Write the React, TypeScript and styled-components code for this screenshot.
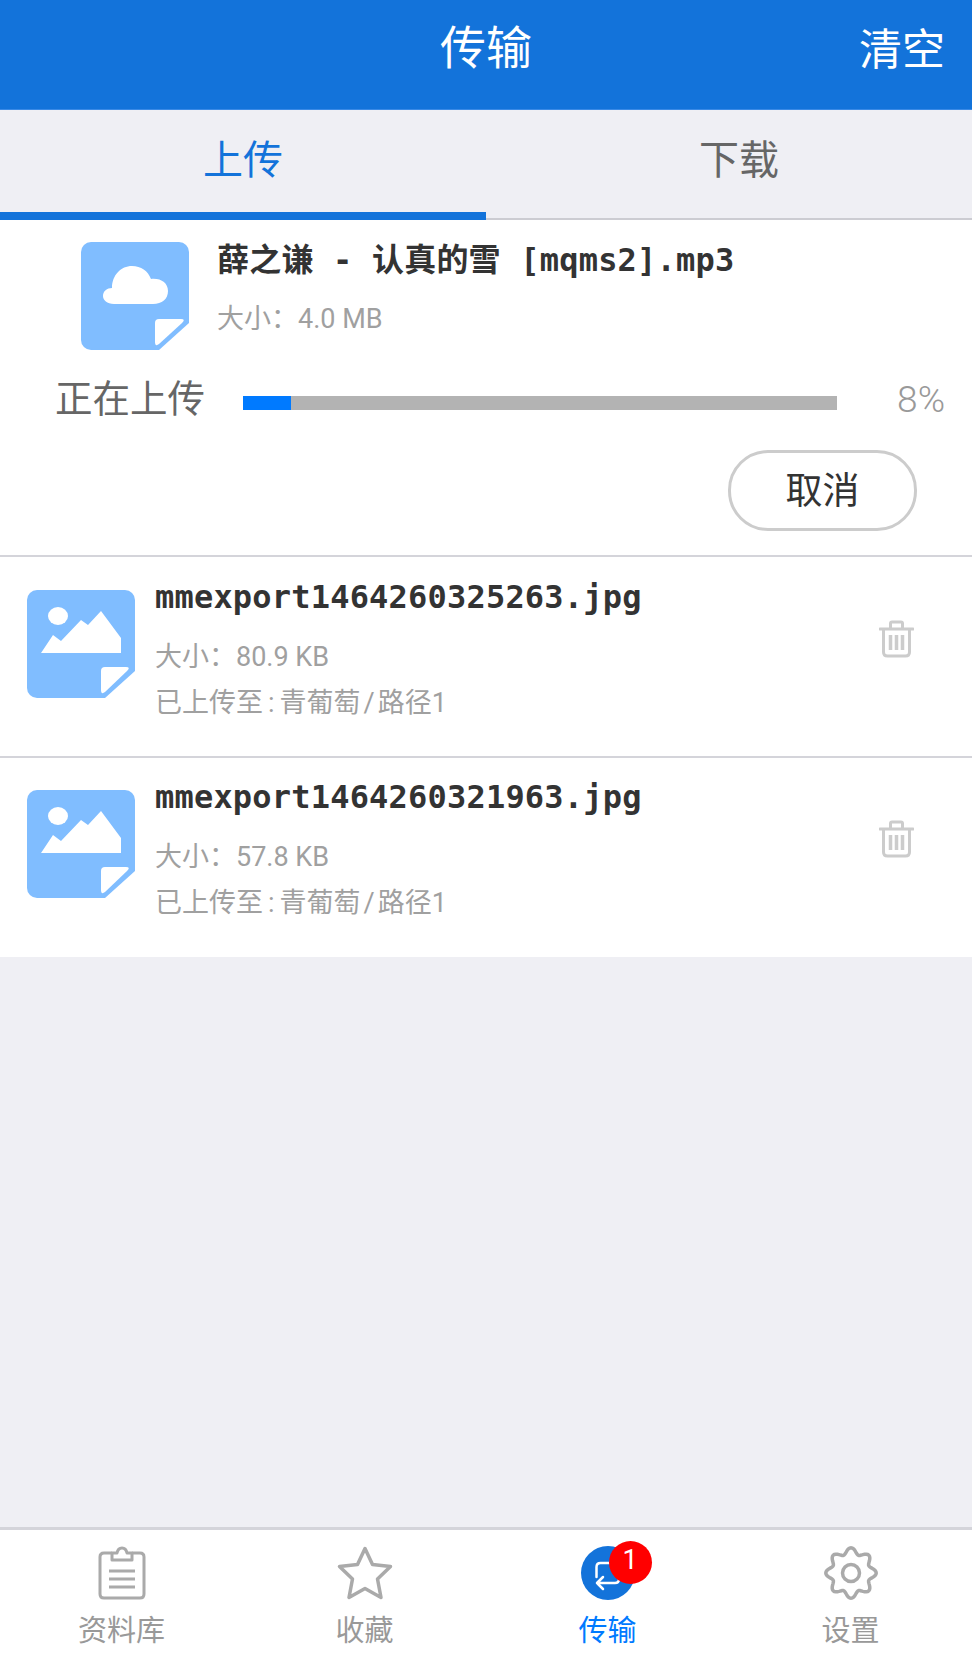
import styled, { createGlobalStyle } from 'styled-components';

const GlobalStyle = createGlobalStyle`
  html, body {
    margin: 0;
    padding: 0;
    background: #efeff4;
  }
  * {
    box-sizing: border-box;
  }
`;

const cjk = '"Noto Sans CJK SC", sans-serif';
const latin = `Roboto, ${cjk}`;
const mono = `"DejaVu Sans Mono", ${cjk}`;

const uploaded = [
  { id: 1, name: 'mmexport1464260325263.jpg', size: '80.9 KB', folder: '青葡萄', sub: '路径1' },
  { id: 2, name: 'mmexport1464260321963.jpg', size: '57.8 KB', folder: '青葡萄', sub: '路径1' },
];

// 톱니 모양 외곽선
const gearOutline = () => {
  const points: string[] = [];
  for (let deg = 0; deg < 360; deg += 3) {
    const rad = (deg * Math.PI) / 180;
    const r = 22.2 + 3 * Math.cos(8 * rad);
    points.push(`${(28 + r * Math.cos(rad)).toFixed(2)} ${(27 + r * Math.sin(rad)).toFixed(2)}`);
  }
  return `M${points.join('L')}Z`;
};

const CloudFile = () => (
  <FileIcon viewBox="0 0 108 108" $top={1}>
    <path d="M10 0H98A10 10 0 0 1 108 10V81L78 108H10A10 10 0 0 1 0 98V10A10 10 0 0 1 10 0Z" fill="#80bdff" />
    <path d="M33 62C26 62 22 58 22 54C22 49 26 46 31 46C31 33 40 24 51 24C60 24 67 29 70 37C80 36 87 41 87 49C87 57 81 62 72 62Z" fill="#fff" />
    <path d="M78 77H100Q105 77 101 81L78 102Q74 105 74 100V81Q74 77 78 77Z" fill="#fff" />
  </FileIcon>
);

const ImageFile = () => (
  <FileIcon viewBox="0 0 108 108" $top={12}>
    <path d="M10 0H98A10 10 0 0 1 108 10V81L78 108H10A10 10 0 0 1 0 98V10A10 10 0 0 1 10 0Z" fill="#80bdff" />
    <ellipse cx="31" cy="26" rx="10" ry="9" fill="#fff" />
    <path d="M14 63L26 45L34 51L54 30L61 35L74 21L94 48V63Z" fill="#fff" />
    <path d="M78 77H99Q104 77 100 81L78 102Q74 105 74 100V81Q74 77 78 77Z" fill="#fff" />
  </FileIcon>
);

const TrashIcon = () => (
  <svg width="35" height="38" viewBox="0 0 35 38" fill="none" stroke="#ccc" strokeWidth="3">
    <path d="M1 9H34" strokeLinecap="round" />
    <path d="M11.500 8V3.500Q11.500 2 13 2H22Q23.500 2 23.500 3.500V8" />
    <path d="M4.500 9V32Q4.500 36 8.500 36H26.500Q30.500 36 30.500 32V9" />
    <path d="M11.500 15V30M17.500 15V30M23.500 15V30" strokeWidth="3.500" />
  </svg>
);

const ClipboardIcon = () => (
  <svg width="54" height="54" viewBox="0 0 54 54" fill="none" stroke="#aaa" strokeWidth="3">
    <path d="M17 7H9Q5 7 5 11V48Q5 52 9 52H45Q49 52 49 48V11Q49 7 45 7H37" />
    <path d="M17 14V7H22Q23 2 27 2Q31 2 32 7H37V14Z" strokeLinejoin="round" />
    <path d="M14 25H40M14 33H40M14 41H40" />
  </svg>
);

const StarIcon = () => (
  <svg width="56" height="54" viewBox="0 0 56 54" fill="none" stroke="#aaa" strokeWidth="3.500" strokeLinejoin="round">
    <path d="M28 2.500L35.500 18.500L53.500 20.500L40.500 33L44 51.500L28 42.500L12 51.500L15.500 33L2.500 20.500L20.500 18.500Z" />
  </svg>
);

const TransferIcon = () => (
  <svg width="54" height="54" viewBox="0 0 54 54" fill="none">
    <circle cx="27" cy="27" r="27" fill="#1373da" />
    <path d="M15.500 31V21Q15.500 17 19.500 17H38M38 30V33Q38 37 34 37H16M22 31L16 37L22 43" stroke="#fff" strokeWidth="2.500" strokeLinecap="round" strokeLinejoin="round" />
  </svg>
);

const GearIcon = () => (
  <svg width="56" height="54" viewBox="0 0 56 54" fill="none" stroke="#aaa" strokeWidth="3.500">
    <path d={gearOutline()} />
    <circle cx="28" cy="27" r="8.500" />
  </svg>
);

const tabs = [
  { label: '资料库', icon: <ClipboardIcon /> },
  { label: '收藏', icon: <StarIcon /> },
  { label: '传输', icon: <TransferIcon />, active: true, badge: 1 },
  { label: '设置', icon: <GearIcon /> },
];

const App = () => (
  <Page>
    <GlobalStyle />
    <Header>
      <HeaderTitle>传输</HeaderTitle>
      <ClearButton>清空</ClearButton>
    </Header>
    <Segments>
      <Segment $active>上传</Segment>
      <Segment>下载</Segment>
    </Segments>
    <ActiveCard>
      <ActiveInfo>
        <CloudFile />
        <ActiveText>
          <FileName>薛之谦 - 认真的雪 [mqms2].mp3</FileName>
          <Meta>大小：4.0 MB</Meta>
        </ActiveText>
      </ActiveInfo>
      <ProgressRow>
        <ProgressLabel>正在上传</ProgressLabel>
        <ProgressTrack>
          <ProgressFill style={{ width: '8%' }} />
        </ProgressTrack>
        <Percent>8%</Percent>
      </ProgressRow>
      <CancelRow>
        <CancelButton>取消</CancelButton>
      </CancelRow>
    </ActiveCard>
    {uploaded.map((item) => (
      <UploadedRow key={item.id}>
        <ImageFile />
        <UploadedText>
          <FileName>{item.name}</FileName>
          <Meta>大小：{item.size}</Meta>
          <Meta>
            已上传至<ColonMark>:</ColonMark>
            {item.folder}
            <SlashMark>/</SlashMark>
            {item.sub}
          </Meta>
        </UploadedText>
        <TrashButton>
          <TrashIcon />
        </TrashButton>
      </UploadedRow>
    ))}
    <Spacer />
    <TabBar>
      {tabs.map((tab) => (
        <TabItem key={tab.label} $active={tab.active}>
          <TabIcon>
            {tab.icon}
            {tab.badge && <Badge>{tab.badge}</Badge>}
          </TabIcon>
          {tab.label}
        </TabItem>
      ))}
    </TabBar>
  </Page>
);

const Page = styled.div`
  display: flex;
  flex-direction: column;
  width: 972px;
  height: 1664px;
  overflow: hidden;
  background: #efeff4;
  font-family: ${latin};
`;

const Header = styled.header`
  position: relative;
  display: flex;
  align-items: center;
  justify-content: center;
  flex: none;
  height: 110px;
  padding-bottom: 22px;
  border-bottom: 1px solid #3a8ae6;
  background: #1373da;
  color: #fff;
`;

const HeaderTitle = styled.h1`
  margin: 0;
  font-family: ${cjk};
  font-size: 46px;
  font-weight: 400;
  line-height: 60px;
`;

const ClearButton = styled.span`
  position: absolute;
  top: 16px;
  right: 27px;
  font-family: ${cjk};
  font-size: 43px;
  line-height: 60px;
`;

const Segments = styled.nav`
  display: flex;
  flex: none;
  height: 110px;
  border-bottom: 2px solid #ccccd2;
`;

const Segment = styled.div<{ $active?: boolean }>`
  display: flex;
  flex: 0 0 50%;
  align-items: center;
  justify-content: center;
  height: ${(p) => (p.$active ? '110px' : '108px')};
  padding-bottom: ${(p) => (p.$active ? '8px' : '14px')};
  padding-left: ${(p) => (p.$active ? '0' : '20px')};
  border-bottom: ${(p) => (p.$active ? '8px solid #1373da' : '0')};
  color: ${(p) => (p.$active ? '#1373da' : '#666')};
  font-family: ${cjk};
  font-size: 40px;
`;

const ActiveCard = styled.section`
  flex: none;
  height: 337px;
  padding: 21px 27px 0 0;
  border-bottom: 2px solid #d4d4da;
  background: #fff;
`;

const ActiveInfo = styled.div`
  display: flex;
  gap: 28px;
  padding-left: 81px;
`;

const FileIcon = styled.svg<{ $top: number }>`
  flex: none;
  width: 108px;
  height: 108px;
  margin-top: ${(p) => p.$top}px;
`;

const ActiveText = styled.div`
  display: flex;
  flex-direction: column;
  gap: 22px;
`;

const FileName = styled.div`
  color: #333;
  font-family: ${mono};
  font-size: 32px;
  font-weight: 700;
  letter-spacing: 0.2px;
  line-height: 38px;
  white-space: pre;
`;

const Meta = styled.div`
  color: #a0a0a0;
  font-family: ${latin};
  font-size: 27px;
  line-height: 36px;
`;

const ColonMark = styled.span`
  margin: 0 5px;
`;

const SlashMark = styled.span`
  margin: 0 3px;
`;

const ProgressRow = styled.div`
  display: flex;
  align-items: flex-start;
  height: 54px;
  margin-top: 19px;
  padding-left: 55px;
`;

const ProgressLabel = styled.span`
  width: 188px;
  color: #666;
  font-family: ${cjk};
  font-size: 37.5px;
  line-height: 54px;
`;

const ProgressTrack = styled.div`
  width: 594px;
  height: 14px;
  margin-top: 27px;
  background: #b3b3b3;
`;

const ProgressFill = styled.div`
  height: 100%;
  background: #007aff;
`;

const Percent = styled.span`
  margin-top: 4px;
  margin-left: auto;
  color: #999;
  font-family: ${latin};
  font-size: 37px;
  font-weight: 300;
  line-height: 54px;
`;

const CancelRow = styled.div`
  display: flex;
  justify-content: flex-end;
  margin-top: 27px;
  padding-right: 28px;
`;

const CancelButton = styled.button`
  width: 189px;
  height: 81px;
  padding: 0 0 5px;
  border: 3px solid #ccc;
  border-radius: 40px;
  background: #fff;
  color: #333;
  font-family: ${cjk};
  font-size: 37px;
`;

const UploadedRow = styled.article`
  display: flex;
  flex: none;
  height: 199px;
  padding: 21px 58px 0 27px;
  background: #fff;

  & + & {
    height: 201px;
    padding-top: 20px;
    border-top: 2px solid #d4d4da;
  }
`;

const UploadedText = styled.div`
  display: flex;
  flex: 1;
  flex-direction: column;
  margin-left: 20px;

  ${Meta}:nth-child(2) {
    margin-top: 23px;
  }
  ${Meta}:nth-child(3) {
    margin-top: 10px;
  }
`;

const TrashButton = styled.div`
  flex: none;
  margin-top: 42px;
`;

const Spacer = styled.div`
  flex: 1;
`;

const TabBar = styled.nav`
  display: grid;
  flex: none;
  grid-template-columns: repeat(4, 1fr);
  height: 137px;
  padding-top: 16px;
  border-top: 3px solid #d4d4da;
  background: #fff;
`;

const TabItem = styled.div<{ $active?: boolean }>`
  display: flex;
  flex-direction: column;
  align-items: center;
  gap: 8px;
  color: ${(p) => (p.$active ? '#007aff' : '#999')};
  font-family: ${cjk};
  font-size: 29px;
  line-height: 40px;
`;

const TabIcon = styled.div`
  position: relative;
  display: flex;
  height: 54px;
`;

const Badge = styled.span`
  position: absolute;
  top: -5px;
  left: 28px;
  width: 43px;
  height: 43px;
  border-radius: 50%;
  background: #f00;
  color: #fff;
  font-family: Roboto, sans-serif;
  font-size: 27px;
  line-height: 38px;
  text-align: center;
`;

export default App;
